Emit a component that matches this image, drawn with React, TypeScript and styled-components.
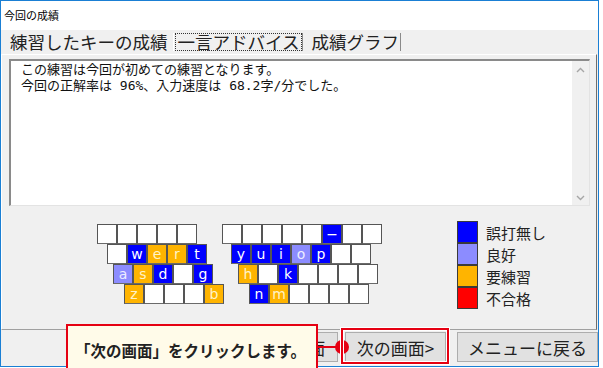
import React from 'react';
import styled, { createGlobalStyle } from 'styled-components';

const Global = createGlobalStyle`
  html, body { margin: 0; padding: 0; background: #fff; }
  body { font-family: "Noto Sans CJK JP", "Noto Sans", sans-serif; color: #000; }
`;

const Stage = styled.div`
  position: relative;
  width: 603px;
  height: 368px;
  overflow: hidden;
  background: #fff;
`;

const Window = styled.div`
  width: 599px;
  height: 367px;
  box-sizing: border-box;
  border: 1px solid #1a7fd4;
  display: flex;
  flex-direction: column;
`;

const TitleBar = styled.div`
  height: 29px;
  flex: none;
  background: #fff;
  display: flex;
  align-items: center;
  padding-left: 3px;
  font-size: 11px;
  line-height: 1;
`;

const Body = styled.div`
  flex: 1;
  background: #f0f0f0;
  display: flex;
  flex-direction: column;
  min-height: 0;
`;

const TabStrip = styled.div`
  height: 24px;
  flex: none;
  display: flex;
  align-items: center;
  font-size: 17.5px;
  line-height: 20px;
  color: #222;
`;

const Tab = styled.div<{ $pl: number; $pr: number; $edge: string }>`
  height: 18px;
  display: flex;
  align-items: center;
  padding: 0 ${p => p.$pr}px 0 ${p => p.$pl}px;
  border-right: 1px solid ${p => p.$edge};
  white-space: nowrap;
`;

const FocusBox = styled.span`
  display: flex;
  align-items: center;
  height: 16px;
  padding: 0 2px;
  border: 1px dotted #333;
`;

const Panel = styled.div`
  height: 276px;
  flex: none;
  box-sizing: border-box;
  margin-right: 1px;
  border-top: 1px solid #fff;
  border-left: 1px solid #fff;
  border-right: 1px solid #6d6d6d;
  border-bottom: 1px solid #a0a0a0;
  padding: 4px 0 0 7px;
  display: flex;
  flex-direction: column;
`;

const TextBox = styled.div`
  width: 581px;
  height: 147px;
  box-sizing: border-box;
  border-top: 2px solid #8a8a8a;
  border-left: 2px solid #8a8a8a;
  border-right: 1px solid #e3e3e3;
  border-bottom: 1px solid #e3e3e3;
  background: #fff;
  display: flex;
`;

const TextContent = styled.div`
  flex: 1;
  padding: 1px 0 0 10px;
  font-family: "DejaVu Sans Mono", "Noto Sans CJK JP", monospace;
  font-size: 13px;
  line-height: 16px;
  color: #111;
  white-space: pre;
`;

const ScrollBar = styled.div`
  width: 17px;
  background: #f0f0f0;
  display: flex;
  flex-direction: column;
  justify-content: space-between;
  align-items: center;
  padding: 6px 0 4px;
`;

const Arrow = ({ up }: { up?: boolean }) => (
  <svg width="9" height="6" viewBox="0 0 9 6">
    <polyline
      points={up ? '1,5 4.5,1.5 8,5' : '1,1 4.5,4.5 8,1'}
      fill="none"
      stroke="#a6a6a6"
      strokeWidth="1.4"
    />
  </svg>
);

const KeySection = styled.div`
  margin-top: 15px;
  display: flex;
  align-items: flex-start;
`;

const KeyBlock = styled.div<{ $ml: number; $w: number }>`
  margin-left: ${p => p.$ml}px;
  margin-top: 3px;
  width: ${p => p.$w}px;
  flex: none;
  display: flex;
  flex-direction: column;
`;

const KeyRow = styled.div<{ $off: number }>`
  display: flex;
  padding-left: ${p => p.$off}px;
`;

const keyBg: Record<string, string> = {
  w: '#ffffff',
  b: '#0000ff',
  l: '#8c8cff',
  o: '#ffb400',
};
const keyFg: Record<string, string> = {
  w: '#000',
  b: '#ffffff',
  l: '#eeeeff',
  o: '#fff3c8',
};

const Key = styled.div<{ $c: string }>`
  width: 20px;
  height: 20px;
  box-sizing: border-box;
  flex: none;
  border: 1px solid #555;
  border-bottom-color: #6a6a6a;
  background: ${p => keyBg[p.$c]};
  color: ${p => keyFg[p.$c]};
  font-family: "DejaVu Sans", sans-serif;
  font-size: 14px;
  line-height: 18px;
  text-align: center;
`;

const Legend = styled.div`
  margin-left: 73px;
  display: flex;
  flex-direction: column;
`;

const LegendRow = styled.div`
  display: flex;
  align-items: center;
  height: 22px;
  gap: 8px;
  font-size: 15px;
  color: #222;
`;

const Swatch = styled.div<{ $color: string }>`
  width: 21px;
  height: 22px;
  box-sizing: border-box;
  border: 1px solid #3a3a3a;
  background: ${p => p.$color};
`;

const ButtonRow = styled.div`
  flex: 1;
  display: flex;
  justify-content: flex-end;
  align-items: flex-start;
  padding-top: 2px;
`;

const Button = styled.div<{ $w: number; $ml: number }>`
  width: ${p => p.$w}px;
  margin-left: ${p => p.$ml}px;
  height: 30px;
  box-sizing: border-box;
  border: 1px solid #adadad;
  background: #e1e1e1;
  display: flex;
  align-items: center;
  justify-content: center;
  font-size: 17px;
  color: #222;
  white-space: nowrap;
`;

const Callout = styled.div`
  position: absolute;
  left: 66px;
  top: 324px;
  width: 252px;
  height: 52px;
  box-sizing: border-box;
  border: 2px solid #e50012;
  background: #fffbe9;
  display: flex;
  align-items: center;
  padding-left: 7px;
  font-size: 15.5px;
  font-weight: bold;
  color: #222;
  white-space: nowrap;
`;

const Connector = styled.div`
  position: absolute;
  left: 318px;
  top: 346px;
  width: 20px;
  height: 2px;
  background: #e50012;
`;

const Dot = styled.div`
  position: absolute;
  left: 335px;
  top: 340px;
  width: 14px;
  height: 14px;
  border-radius: 50%;
  background: #e50012;
`;

const Highlight = styled.div`
  position: absolute;
  left: 341px;
  top: 328px;
  width: 108px;
  height: 36px;
  box-sizing: border-box;
  border: 2px solid #e50012;
  box-shadow: 0 0 0 1px #fff, inset 0 0 0 1px #fff;
`;

type K = [string, string];
const leftRows: { off: number; keys: K[] }[] = [
  { off: 0, keys: [['w', ''], ['w', ''], ['w', ''], ['w', ''], ['w', '']] },
  { off: 10, keys: [['w', ''], ['b', 'w'], ['o', 'e'], ['o', 'r'], ['b', 't']] },
  { off: 16, keys: [['l', 'a'], ['o', 's'], ['b', 'd'], ['w', ''], ['b', 'g']] },
  { off: 27, keys: [['o', 'z'], ['w', ''], ['w', ''], ['w', ''], ['o', 'b']] },
];
const rightRows: { off: number; keys: K[] }[] = [
  {
    off: 0,
    keys: [['w', ''], ['w', ''], ['w', ''], ['w', ''], ['w', ''], ['b', '−'], ['w', ''], ['w', '']],
  },
  {
    off: 9,
    keys: [['b', 'y'], ['b', 'u'], ['b', 'i'], ['l', 'o'], ['b', 'p'], ['w', ''], ['w', '']],
  },
  {
    off: 16,
    keys: [['o', 'h'], ['w', ''], ['b', 'k'], ['w', ''], ['w', ''], ['w', ''], ['w', '']],
  },
  { off: 27, keys: [['b', 'n'], ['o', 'm'], ['w', ''], ['w', ''], ['w', ''], ['w', '']] },
];

const Block = ({ rows, ml, w }: { rows: typeof leftRows; ml: number; w: number }) => (
  <KeyBlock $ml={ml} $w={w}>
    {rows.map((r, i) => (
      <KeyRow key={i} $off={r.off}>
        {r.keys.map(([c, t], j) => (
          <Key key={j} $c={c}>
            {t}
          </Key>
        ))}
      </KeyRow>
    ))}
  </KeyBlock>
);

const legend = [
  ['#0000ff', '誤打無し'],
  ['#8c8cff', '良好'],
  ['#ffb400', '要練習'],
  ['#ff0000', '不合格'],
];

export default function App() {
  return (
    <Stage>
      <Global />
      <Window>
        <TitleBar>今回の成績</TitleBar>
        <Body>
          <TabStrip>
            <Tab $pl={9} $pr={5} $edge="#ffffff">練習したキーの成績</Tab>
            <Tab $pl={1} $pr={0} $edge="#8a8a8a">
              <FocusBox>一言アドバイス</FocusBox>
            </Tab>
            <Tab $pl={8} $pr={1} $edge="#8a8a8a">成績グラフ</Tab>
          </TabStrip>
          <Panel>
            <TextBox>
              <TextContent>
                {'この練習は今回が初めての練習となります。\n今回の正解率は 96%、入力速度は 68.2字/分でした。'}
              </TextContent>
              <ScrollBar>
                <Arrow up />
                <Arrow />
              </ScrollBar>
            </TextBox>
            <KeySection>
              <Block rows={leftRows} ml={88} w={125} />
              <Block rows={rightRows} ml={0} w={162} />
              <Legend>
                {legend.map(([c, t]) => (
                  <LegendRow key={t}>
                    <Swatch $color={c} />
                    {t}
                  </LegendRow>
                ))}
              </Legend>
            </KeySection>
          </Panel>
          <ButtonRow>
            <Button $w={103} $ml={0}>&lt;前の画面</Button>
            <Button $w={101} $ml={7}>次の画面&gt;</Button>
            <Button $w={141} $ml={11}>メニューに戻る</Button>
          </ButtonRow>
        </Body>
      </Window>
      <Callout>「次の画面」をクリックします。</Callout>
      <Connector />
      <Dot />
      <Highlight />
    </Stage>
  );
}
